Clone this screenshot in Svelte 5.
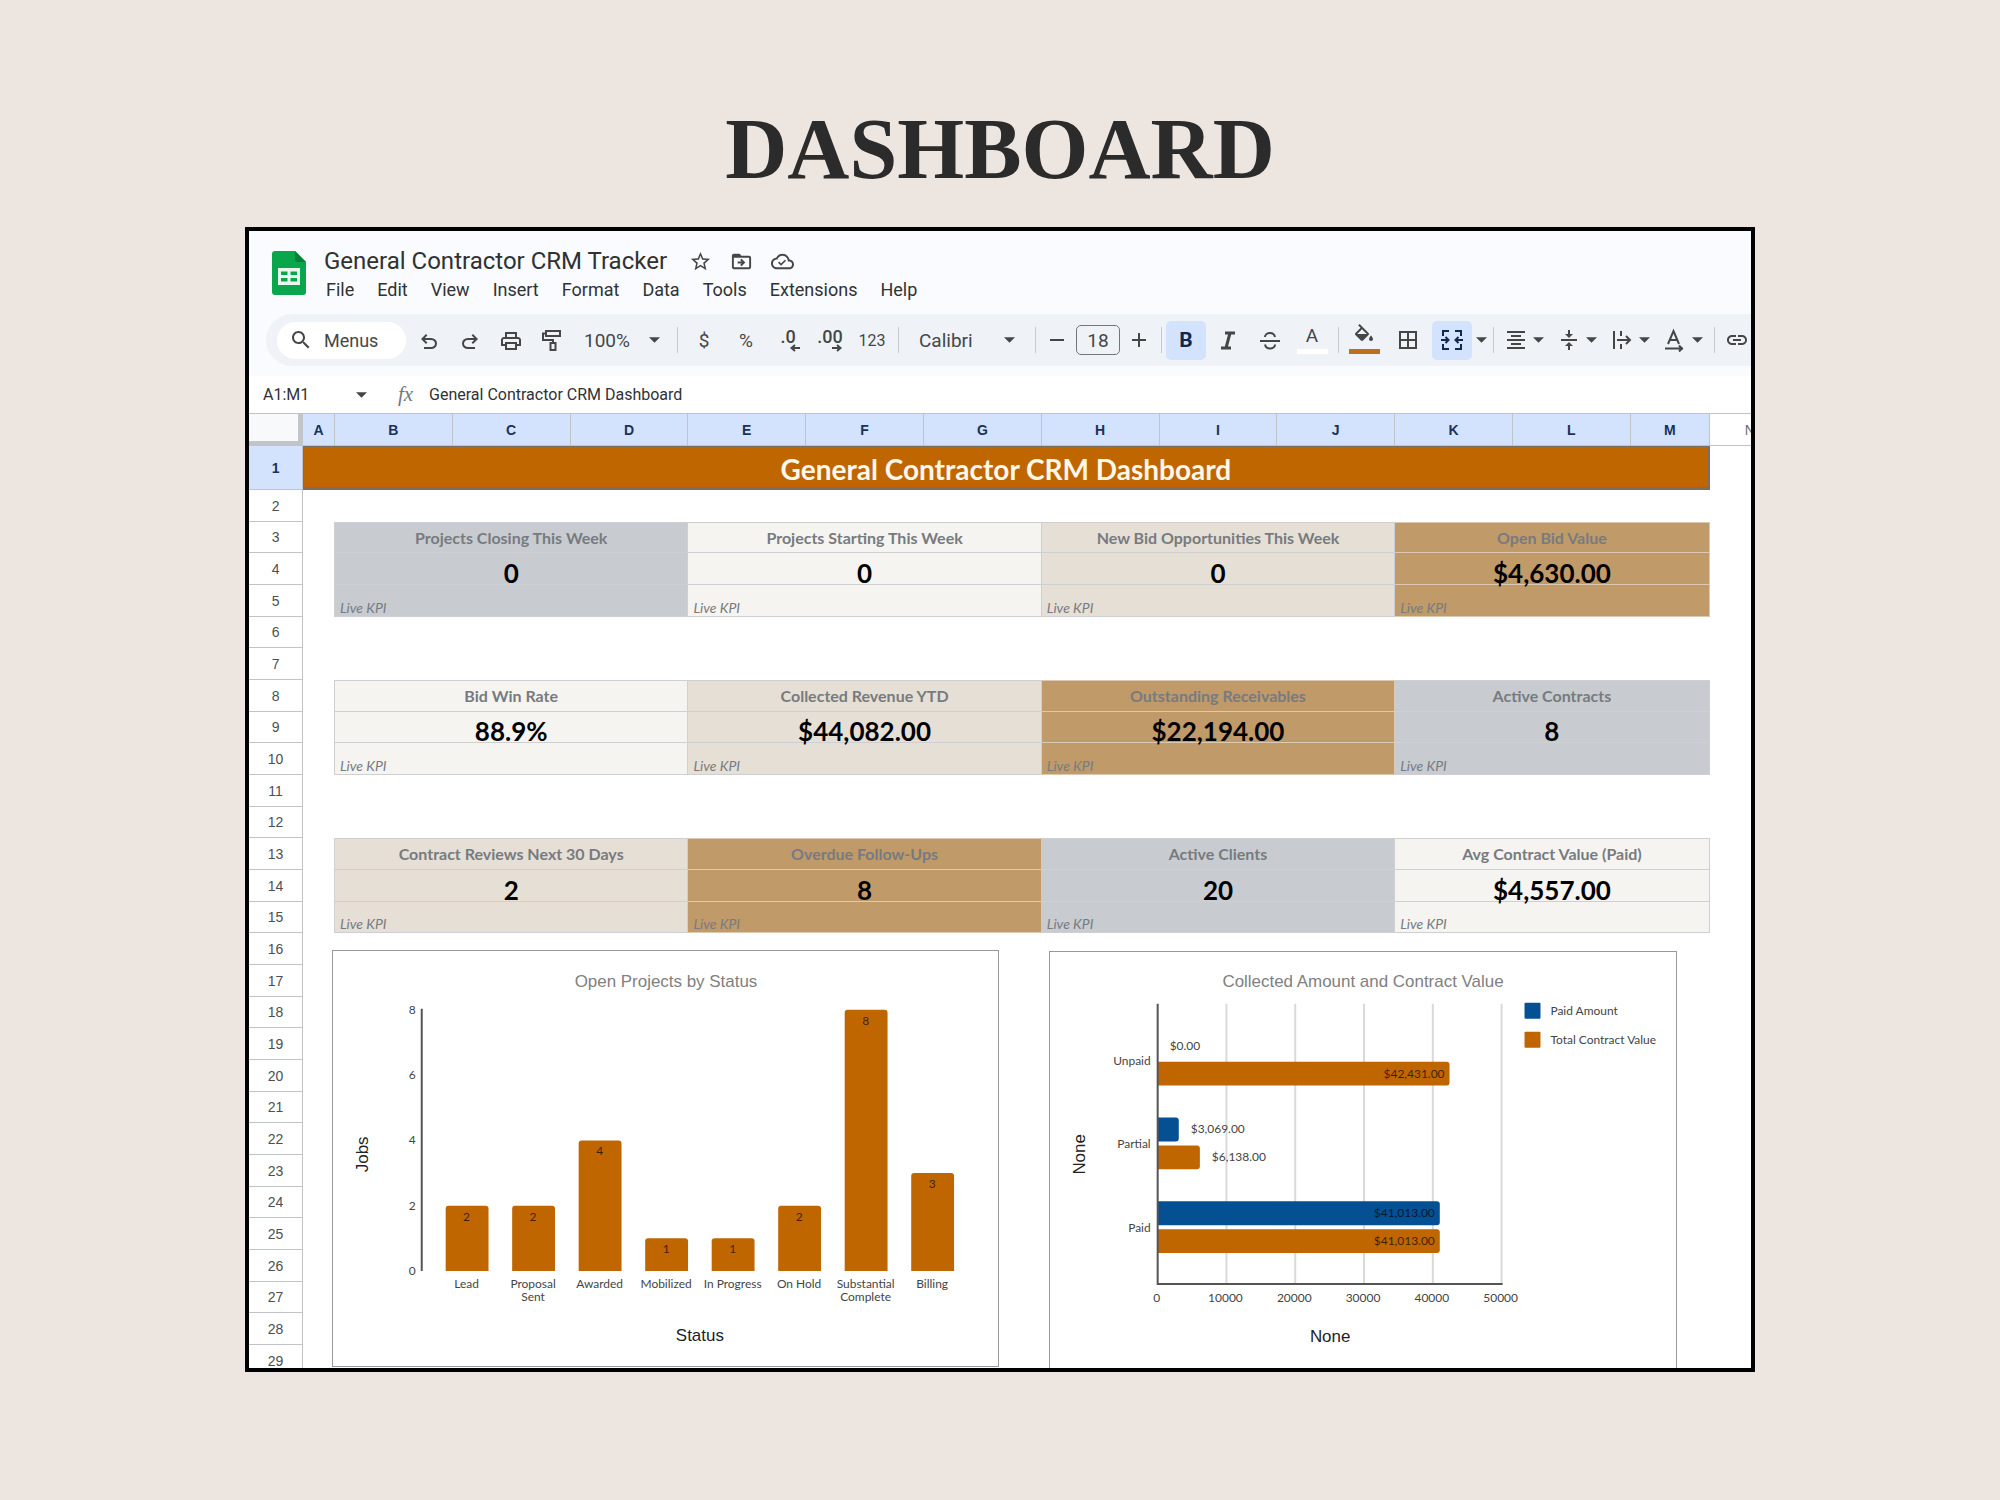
<script>
	const menus = ["File", "Edit", "View", "Insert", "Format", "Data", "Tools", "Extensions", "Help"]

	const columns = ["A", "B", "C", "D", "E", "F", "G", "H", "I", "J", "K", "L", "M", "N"]

	const kpis = {
		3: [
			{ label: "Projects Closing This Week", value: "0", tone: "slate" },
			{ label: "Projects Starting This Week", value: "0", tone: "pale" },
			{ label: "New Bid Opportunities This Week", value: "0", tone: "sand" },
			{ label: "Open Bid Value", value: "$4,630.00", tone: "tan" }
		],
		8: [
			{ label: "Bid Win Rate", value: "88.9%", tone: "pale" },
			{ label: "Collected Revenue YTD", value: "$44,082.00", tone: "sand" },
			{ label: "Outstanding Receivables", value: "$22,194.00", tone: "tan" },
			{ label: "Active Contracts", value: "8", tone: "slate" }
		],
		13: [
			{ label: "Contract Reviews Next 30 Days", value: "2", tone: "sand" },
			{ label: "Overdue Follow-Ups", value: "8", tone: "tan" },
			{ label: "Active Clients", value: "20", tone: "slate" },
			{ label: "Avg Contract Value (Paid)", value: "$4,557.00", tone: "pale" }
		]
	}

	// a kpi block is three rows high: label, value, note
	const rows = Array.from({ length: 28 }, (_, i) => {
		const n = i + 2
		for (const [start, cards] of Object.entries(kpis)) {
			const part = n - Number(start)
			if (part >= 0 && part < 3) return { n, cards, part: ["label", "value", "note"][part] }
		}
		return { n }
	})

	const statuses = [
		{ name: ["Lead"], jobs: 2 },
		{ name: ["Proposal", "Sent"], jobs: 2 },
		{ name: ["Awarded"], jobs: 4 },
		{ name: ["Mobilized"], jobs: 1 },
		{ name: ["In Progress"], jobs: 1 },
		{ name: ["On Hold"], jobs: 2 },
		{ name: ["Substantial", "Complete"], jobs: 8 },
		{ name: ["Billing"], jobs: 3 }
	]

	const base = 321
	const jobHeight = n => n * 262 / 8
	const jobX = i => 113 + i * 467 / 7

	const payments = [
		{ name: "Unpaid", paid: 0, total: 42431 },
		{ name: "Partial", paid: 3069, total: 6138 },
		{ name: "Paid", paid: 41013, total: 41013 }
	]

	const amount = v => v * 345 / 50000
	const money = v => "$" + v.toLocaleString("en-US", { minimumFractionDigits: 2 })

	const barPath = (x, y, w, h) => `M${x} ${y + h}v${3 - h}q0-3 3-3h${w - 6}q3 0 3 3v${h - 3}z`
	const sidePath = (x, y, w, h) => `M${x} ${y}h${w - 3}q3 0 3 3v${h - 6}q0 3-3 3h${3 - w}z`

	const icons = {
		search: "M15.5 14h-.79l-.28-.27C15.41 12.59 16 11.11 16 9.5 16 5.91 13.09 3 9.5 3S3 5.91 3 9.5 5.91 16 9.5 16c1.61 0 3.09-.59 4.23-1.57l.27.28v.79l5 4.99L20.49 19l-4.99-5zm-6 0C7.01 14 5 11.99 5 9.5S7.01 5 9.5 5 14 7.01 14 9.5 11.99 14 9.5 14z",
		undo: "M7 21v-2h7.1q1.575 0 2.738-1T18 15.5 16.838 13 14.1 12H7.8l2.6 2.6L9 16l-5-5 5-5 1.4 1.4L7.8 10h6.3q2.425 0 4.163 1.575T20 15.5t-1.737 3.925T14.1 21z",
		redo: "M17 21v-2H9.9q-1.575 0-2.738-1T6 15.5 7.162 13 9.9 12h6.3l-2.6 2.6L15 16l5-5-5-5-1.4 1.4L16.2 10H9.9q-2.425 0-4.163 1.575T4 15.5t1.737 3.925T9.9 21z",
		print: "M19 9h-1V4H6v5H5c-1.66 0-3 1.34-3 3v6h4v4h12v-4h4v-6c0-1.66-1.34-3-3-3zM8 6h8v3H8V6zm8 12v2H8v-4h8v2zm2-2v-2H6v2H4v-4c0-.55.45-1 1-1h14c.55 0 1 .45 1 1v4h-2z",
		star: "M22 9.24l-7.19-.62L12 2 9.19 8.63 2 9.24l5.46 4.73L5.82 21 12 17.27 18.18 21l-1.63-7.03L22 9.24zM12 15.4l-3.76 2.27 1-4.28-3.32-2.88 4.38-.38L12 6.1l1.71 4.04 4.38.38-3.32 2.88 1 4.28L12 15.4z",
		move: "M20 6h-8l-2-2H4c-1.1 0-2 .9-2 2v12c0 1.1.9 2 2 2h16c1.1 0 2-.9 2-2V8c0-1.1-.9-2-2-2zm0 12H4V8h16v10zm-7.84-6H8v2h4.16l-1.59 1.59L11.99 17 16 13.01 11.99 9l-1.41 1.41L12.16 12z",
		cloud: "M19.35 10.04C18.67 6.59 15.64 4 12 4 9.11 4 6.6 5.64 5.35 8.04 2.34 8.36 0 10.91 0 14c0 3.31 2.69 6 6 6h13c2.76 0 5-2.24 5-5 0-2.64-2.05-4.78-4.65-4.96zM19 18H6c-2.21 0-4-1.79-4-4 0-2.05 1.53-3.76 3.56-3.97l1.07-.11.5-.95C8.08 7.14 9.94 6 12 6c2.62 0 4.88 1.86 5.39 4.43l.3 1.5 1.53.11c1.56.1 2.78 1.41 2.78 2.96 0 1.65-1.35 3-3 3zm-8.5-3.9l-2-2-1.2 1.2 3.2 3.2 5.2-5.2-1.2-1.2z",
		borders: "M3 3v18h18V3H3zm8 16H5v-6h6v6zm0-8H5V5h6v6zm8 8h-6v-6h6v6zm0-8h-6V5h6v6z",
		fill: "M16.56 8.94L7.62 0 6.21 1.41l2.38 2.38-5.15 5.15c-.59.59-.59 1.54 0 2.12l5.5 5.5c.29.29.68.44 1.06.44s.77-.15 1.06-.44l5.5-5.5c.59-.58.59-1.53 0-2.12zM5.21 10L10 5.21 14.79 10H5.21zM19 11.5s-2 2.17-2 3.5c0 1.1.9 2 2 2s2-.9 2-2c0-1.33-2-3.5-2-3.5z",
		center: "M7 15v2h10v-2H7zm-4 6h18v-2H3v2zm0-8h18v-2H3v2zm4-6v2h10V7H7zM3 3v2h18V3H3z",
		middle: "M8 18h3v4h2v-4h3l-4-4-4 4zm8-12h-3V2h-2v4H8l4 4 4-4zM4 11v2h16v-2H4z",
		link: "M3.9 12c0-1.71 1.39-3.1 3.1-3.1h4V7H7c-2.76 0-5 2.24-5 5s2.24 5 5 5h4v-1.9H7c-1.71 0-3.1-1.39-3.1-3.1zM8 13h8v-2H8v2zm9-6h-4v1.9h4c1.71 0 3.1 1.39 3.1 3.1s-1.39 3.1-3.1 3.1h-4V17h4c2.76 0 5-2.24 5-5s-2.24-5-5-5z"
	}
</script>

{#snippet icon(name)}
	<svg class="icon" viewBox="0 0 24 24"><path d={icons[name]} /></svg>
{/snippet}

{#snippet caret()}
	<svg class="caret" viewBox="0 0 12 6"><path d="M0 0h12L6 6z" /></svg>
{/snippet}

<main>
	<h1>DASHBOARD</h1>

	<section class="window">
		<header>
			<svg class="logo" viewBox="0 0 34 44">
				<path fill="#0aa64c" d="M3 0h20l11 11v30q0 3-3 3H3q-3 0-3-3V3q0-3 3-3z" />
				<path fill="#078038" d="M23 0l11 11H26q-3 0-3-3z" />
				<path fill="#e9f7ee" fill-rule="evenodd" d="M6 17h22v17H6zM9 20.5v3.5h6.5v-3.5zM18.5 20.5v3.5H25v-3.5zM9 27v3.5h6.5V27zM18.5 27v3.5H25V27z" />
			</svg>
			<div class="heading">
				<div class="name">
					<h2>General Contractor CRM Tracker</h2>
					<button aria-label="Star">{@render icon("star")}</button>
					<button aria-label="Move">{@render icon("move")}</button>
					<button aria-label="Saved">{@render icon("cloud")}</button>
				</div>
				<nav>
					{#each menus as menu}
						<button>{menu}</button>
					{/each}
				</nav>
			</div>
		</header>

		<div class="toolbar">
			<button class="search">{@render icon("search")}Menus</button>
			<div class="group history">
				<button class="tool" aria-label="Undo">{@render icon("undo")}</button>
				<button class="tool" aria-label="Redo">{@render icon("redo")}</button>
				<button class="tool" aria-label="Print">{@render icon("print")}</button>
				<button class="tool" aria-label="Paint format">
					<svg class="icon line" viewBox="0 0 24 24"><path d="M6 3h14v5H6zM6 5.5H3V12h10v3M10.5 15h5v7h-5z" /></svg>
				</button>
				<label class="pick zoom">
					<select aria-label="Zoom"><option>100%</option></select>
					{@render caret()}
				</label>
			</div>
			<span class="divider"></span>
			<div class="group">
				<button class="tool">$</button>
				<button class="tool">%</button>
				<button class="tool decimals" aria-label="Decrease decimal places">
					<span>.0</span>
					<svg viewBox="0 0 10 8"><path d="M10 4H1.5M5 1L1.5 4 5 7" /></svg>
				</button>
				<button class="tool decimals" aria-label="Increase decimal places">
					<span>.00</span>
					<svg viewBox="0 0 10 8"><path d="M0 4h8.5M5 1l3.5 3L5 7" /></svg>
				</button>
				<button class="tool small">123</button>
			</div>
			<span class="divider"></span>
			<label class="pick font">
				<select aria-label="Font"><option>Calibri</option></select>
				{@render caret()}
			</label>
			<span class="divider"></span>
			<div class="group size">
				<button class="step" aria-label="Decrease font size"><svg class="icon line" viewBox="0 0 24 24"><path d="M5 12h14" /></svg></button>
				<input aria-label="Font size" value="18" />
				<button class="step" aria-label="Increase font size"><svg class="icon line" viewBox="0 0 24 24"><path d="M5 12h14M12 5v14" /></svg></button>
			</div>
			<span class="divider"></span>
			<div class="group style">
				<button class="tool bold on">B</button>
				<button class="tool" aria-label="Italic">
					<svg class="icon line heavy" viewBox="0 0 24 24"><path d="M9 5h10M5 20h10M14 5l-4 15" /></svg>
				</button>
				<button class="tool" aria-label="Strikethrough">
					<svg class="icon line" viewBox="0 0 24 24"><path d="M2 13h20M17 9c-.5-2.500-2.500-4-5-4s-5 1.500-5 4M7 16.500c.5 2.500 2.500 4 5 4s5-1.500 5-4" /></svg>
				</button>
				<button class="tool colour">A<span class="swatch white"></span></button>
			</div>
			<span class="divider"></span>
			<div class="group cells">
				<button class="tool colour" aria-label="Fill colour">{@render icon("fill")}<span class="swatch"></span></button>
				<button class="tool" aria-label="Borders">{@render icon("borders")}</button>
				<button class="tool on" aria-label="Merge cells">
					<svg class="icon line" viewBox="0 0 24 24"><path d="M9 3H3v5M3 16v5h6M15 3h6v5M21 16v5h-6M1 12h7M5.5 9l3 3-3 3M23 12h-7M18.5 9l-3 3 3 3" /></svg>
				</button>
				<button class="more" aria-label="Merge options">{@render caret()}</button>
			</div>
			<span class="divider"></span>
			<div class="group align">
				<button class="drop" aria-label="Horizontal align">{@render icon("center")}{@render caret()}</button>
				<button class="drop" aria-label="Vertical align">{@render icon("middle")}{@render caret()}</button>
				<button class="drop" aria-label="Text wrapping">
					<svg class="icon line" viewBox="0 0 24 24"><path d="M4 3v18M11 3v5M11 16v5M7 12h13M16 8l4 4-4 4" /></svg>{@render caret()}
				</button>
				<button class="drop" aria-label="Text rotation">
					<svg class="icon line" viewBox="0 0 24 24"><path d="M5 16l5.500-13 5.500 13M7 12h7M2 20.500h18M16 17.500l3 3-3 3" /></svg>{@render caret()}
				</button>
			</div>
			<span class="divider"></span>
			<button class="tool link" aria-label="Insert link">{@render icon("link")}</button>
		</div>

		<div class="formula">
			<input class="range" aria-label="Name box" value="A1:M1" />
			<button aria-label="Named ranges">{@render caret()}</button>
			<label for="fx">fx</label>
			<input id="fx" value="General Contractor CRM Dashboard" />
		</div>

		<div class="sheet">
			<table>
				<colgroup>
					<col class="numbers" />
					<col class="narrow" />
					{#each columns.slice(1, 12) as _}
						<col class="wide" />
					{/each}
					<col class="last" />
					<col class="rest" />
				</colgroup>
				<thead>
					<tr>
						<td class="corner"></td>
						{#each columns as column}
							<th class:plain={column == "N"}>{column}</th>
						{/each}
					</tr>
				</thead>
				<tbody>
					<tr class="banner">
						<th>1</th>
						<td colspan="13">General Contractor CRM Dashboard</td>
						<td></td>
					</tr>
					{#each rows as row}
						<tr>
							<th>{row.n}</th>
							{#if row.cards}
								<td class="edge"></td>
								{#each row.cards as card}
									<td colspan="3" class="{card.tone} {row.part}">{row.part == "note" ? "Live KPI" : card[row.part]}</td>
								{/each}
								<td></td>
							{:else}
								<td colspan="14"></td>
							{/if}
						</tr>
					{/each}
				</tbody>
			</table>

			<div class="charts">
				<svg class="chart jobs" viewBox="0 0 667 416">
					<text class="title" x="334" y="36">Open Projects by Status</text>
					{#each [0, 2, 4, 6, 8] as tick}
						<text class="end" x="83" y={base + 4 - jobHeight(tick)}>{tick}</text>
					{/each}
					<path class="axis" d="M89 58v263" />
					{#each statuses as status, i}
						<path class="total" d={barPath(jobX(i), base - jobHeight(status.jobs), 43, jobHeight(status.jobs))} />
						<text class="inside" x={jobX(i) + 21} y={base - jobHeight(status.jobs) + 15}>{status.jobs}</text>
						{#each status.name as line, j}
							<text x={jobX(i) + 21} y={338 + j * 13}>{line}</text>
						{/each}
					{/each}
					<text class="caption" x="368" y="391">Status</text>
					<text class="caption" transform="translate(35 204) rotate(-90)">Jobs</text>
				</svg>

				<svg class="chart values" viewBox="0 0 628 430">
					<text class="title" x="314" y="35">Collected Amount and Contract Value</text>
					{#each [0, 10000, 20000, 30000, 40000, 50000] as tick}
						{#if tick}
							<path class="grid" d="M{108 + amount(tick)} 52v281" />
						{/if}
						<text x={107 + amount(tick)} y="351">{tick}</text>
					{/each}
					{#each payments as row, i}
						<text class="end" x="101" y={113 + i * 84}>{row.name}</text>
						{#each [row.paid, row.total] as value, j}
							{@const y = 82 + i * 84 + j * 28}
							{#if value}
								<path class={j ? "total" : "paid"} d={sidePath(108, y, amount(value), 24)} />
							{/if}
							{#if value > 10000}
								<text class="inside end" x={103 + amount(value)} y={y + 16}>{money(value)}</text>
							{:else}
								<text class="start" x={120 + amount(value)} y={y + 16}>{money(value)}</text>
							{/if}
						{/each}
					{/each}
					<path class="axis" d="M108 52v281h346" />
					<rect class="paid" x="476" y="51" width="16" height="16" rx="1" />
					<text class="start" x="502" y="63">Paid Amount</text>
					<rect class="total" x="476" y="80" width="16" height="16" rx="1" />
					<text class="start" x="502" y="92">Total Contract Value</text>
					<text class="caption" x="281" y="391">None</text>
					<text class="caption" transform="translate(35 203) rotate(-90)">None</text>
				</svg>
			</div>
		</div>
	</section>
</main>


<style>

	:global(body) {
		background: #ede5df;
	}

	main {
		display: flex;
		flex-direction: column;

		height: 100vh;
		padding: 99px 245px 128px;

		box-sizing: border-box;

		font-family: Roboto, "Liberation Sans", sans-serif;
		color: #444746;
	}

	h1 {
		margin: 0 0 28px;

		font: 700 86px/100px "Liberation Serif", serif;
		text-align: center;
		color: #2b2b2b;
	}

	.window {
		display: flex;
		flex-direction: column;
		flex: 1;

		min-height: 0;

		border: 4px solid #000000;

		overflow: hidden;

		background: #f9fbfe;
	}

	button, input, select {
		margin: 0;
		padding: 0;

		border: 0;

		background: none;

		font: inherit;
		color: inherit;
	}

	select {
		appearance: none;
	}

	.icon {
		display: block;
		flex: none;

		width: 24px;
		height: 24px;

		fill: currentColor;
	}

	.line {
		fill: none;
		stroke: currentColor;
		stroke-width: 2;
	}

	.heavy {
		stroke-width: 3;
	}

	.caret {
		display: block;
		flex: none;

		width: 11px;
		height: 6px;

		fill: #444746;
	}

	header {
		display: flex;
		gap: 18px;

		padding: 16px 23px 0;
	}

	.logo {
		width: 34px;
		height: 44px;

		margin-top: 4px;
	}

	.name {
		display: flex;
		align-items: center;
		gap: 18px;

		height: 28px;
	}

	.name .icon {
		width: 23px;
		height: 23px;
	}

	h2 {
		margin: 0 4px 0 0;

		font-size: 24px;
		font-weight: 400;
		color: #2f3133;
	}

	nav {
		display: flex;
		gap: 23px;

		height: 28px;
		padding-left: 2px;

		font-size: 18px;
		color: #303235;
	}

	.toolbar {
		display: flex;
		align-items: center;

		height: 52px;
		margin: 11px 0 10px 17px;
		padding-left: 11px;

		border-radius: 26px 0 0 26px;

		overflow: hidden;

		background: #eff3f8;

		font-size: 19px;
	}

	.search {
		display: flex;
		align-items: center;
		flex: none;
		gap: 11px;

		width: 129px;
		height: 37px;
		padding-left: 12px;

		box-sizing: border-box;

		border-radius: 19px;

		background: #ffffff;

		font-size: 18px;
	}

	.group {
		display: flex;
		align-items: center;
		flex: none;
		gap: 2px;

		padding: 0 6px;
	}

	.history {
		gap: 1px;

		padding: 0 7px 0 3px;
	}

	.divider {
		flex: none;

		width: 1px;
		height: 26px;

		background: #c7cacd;
	}

	.tool {
		display: flex;
		align-items: center;
		justify-content: center;
		flex: none;

		width: 40px;
		height: 39px;

		border-radius: 5px;
	}

	.on {
		background: #d3e3fd;

		color: #10284f;
	}

	.bold {
		font-size: 21px;
		font-weight: 700;
	}

	.small {
		font-size: 16px;
	}

	.pick {
		display: flex;
		align-items: center;
	}

	.pick select {
		flex: 1;

		min-width: 0;
	}

	.zoom {
		width: 76px;
		padding: 0 10px 0 11px;
	}

	.font {
		flex: none;

		width: 96px;
		padding: 0 20px;
	}

	.decimals {
		flex-direction: column;

		font-size: 18px;
		font-weight: 500;
		line-height: 15px;
	}

	.decimals svg {
		align-self: flex-end;

		width: 10px;
		height: 8px;
		margin-right: 8px;

		fill: none;
		stroke: currentColor;
		stroke-width: 2;
	}

	.size {
		padding: 0 5px 0 4px;
	}

	.size input {
		width: 44px;
		height: 30px;

		box-sizing: border-box;

		border: 1px solid #747775;
		border-radius: 5px;

		text-align: center;
	}

	.step {
		display: flex;
		justify-content: center;

		width: 34px;
	}

	.style {
		padding-left: 4px;
	}

	.colour {
		flex-direction: column;
		justify-content: flex-end;
		gap: 1px;

		line-height: 24px;
	}

	.swatch {
		width: 31px;
		height: 5px;
		margin-bottom: 6px;

		background: #bf6f1c;
	}

	.white {
		background: #ffffff;
	}

	.cells {
		gap: 4px;

		padding: 0 5px;
	}

	.more {
		width: 12px;
	}

	.align {
		gap: 0;

		padding: 0 4px;
	}

	.drop {
		display: flex;
		align-items: center;
		gap: 5px;

		width: 53px;
		padding-left: 6px;
	}

	.link {
		width: 44px;
	}

	.formula {
		display: flex;
		align-items: center;
		flex: none;

		height: 37px;
		padding-left: 14px;

		background: #ffffff;

		font-size: 16px;
		color: #303235;
	}

	.range {
		width: 93px;
	}

	.formula label {
		width: 31px;
		margin-left: 31px;

		font: italic 400 21px "Liberation Serif", serif;
		color: #75787b;
	}

	#fx {
		flex: 1;
	}

	.sheet {
		position: relative;

		flex: 1;

		min-height: 0;

		background: #ffffff;
	}

	table {
		width: 100%;

		table-layout: fixed;
		border-collapse: separate;
		border-spacing: 0;

		font-family: Lato, "Liberation Sans", sans-serif;
	}

	/* proportions, the table stretches them to its own width */
	.numbers { width: 46px; }
	.narrow { width: 27px; }
	.wide { width: 100px; }
	.last { width: 67px; }
	.rest { width: 35px; }

	tr {
		height: 32px;
	}

	tbody tr:nth-child(3n) {
		height: 31px;
	}

	thead tr {
		height: 33px;
	}

	th, td {
		padding: 0;

		box-sizing: border-box;
	}

	th {
		border-right: 1px solid #c0c3c7;
		border-bottom: 1px solid #c0c3c7;

		font: 400 14px "Liberation Sans", sans-serif;
		color: #4c4f53;
	}

	thead th, .banner th {
		background: #d3e3fd;

		font-weight: 700;
		color: #1b3157;
	}

	thead th, .corner {
		border-top: 1px solid #c0c3c7;
	}

	thead .plain {
		padding-left: 35px;

		border-right: 0;

		background: #ffffff;

		font-weight: 400;
		text-align: left;
		color: #6b6e72;
	}

	.corner {
		border-right: 5px solid #c1c4c8;
		border-bottom: 5px solid #c1c4c8;

		background: #f8f9fa;
	}

	tbody .banner {
		height: 44px;
	}

	.banner td:nth-child(2) {
		padding-top: 3px;

		border: 1px solid #7b6c66;
		border-width: 1px 2px 3px 1px;

		background: #bf6600;

		font-size: 28px;
		font-weight: 700;
		line-height: 36px;
		text-align: center;
		color: #fff8ea;
	}

	.edge {
		border-right: 1px solid #cdd0d2;
	}

	.label, .value, .note {
		border-right: 1px solid #cdd0d2;
		border-bottom: 1px solid #cdd0d2;

		line-height: 22px;
		text-align: center;
	}

	.label {
		border-top: 1px solid #cdd0d2;

		font-size: 16px;
		font-weight: 700;
		color: #777b80;
	}

	.value {
		padding-top: 8px;

		font-size: 26px;
		font-weight: 700;
		color: #000000;
	}

	.note {
		padding: 13px 5px 0;

		font-size: 14px;
		font-style: italic;
		line-height: 17px;
		text-align: left;
		color: #777b80;
	}

	.slate { background: #c8ccd0; }
	.pale { background: #f5f4f1; }
	.sand { background: #e6dfd6; }

	.tan {
		border-color: #dbc9b2;

		background: #c09a69;
	}

	.charts {
		position: absolute;
		top: 537px;
		left: 83px;
		right: 74px;

		display: flex;
		align-items: flex-start;
		gap: 50px;
	}

	.chart {
		min-width: 0;

		box-sizing: border-box;

		border: 1px solid #97999b;

		background: #ffffff;

		font-family: Lato, "Liberation Sans", sans-serif;
		font-size: 12px;
	}

	.jobs {
		flex: 667;
	}

	.values {
		flex: 628;

		margin-top: 1px;
	}

	text {
		fill: #444444;
		text-anchor: middle;
	}

	.start { text-anchor: start; }
	.end { text-anchor: end; }
	.inside { fill: #000000; fill-opacity: 0.7; }

	.title, .caption {
		font-family: "Liberation Sans", sans-serif;
		font-size: 17px;
	}

	.title { fill: #808080; }
	.caption { fill: #222222; }

	.total { fill: #bf6600; }
	.paid { fill: #054f93; }

	.axis {
		fill: none;
		stroke: #555555;
		stroke-width: 2;
	}

	.grid {
		stroke: #d9d9d9;
		stroke-width: 2;
	}

</style>
